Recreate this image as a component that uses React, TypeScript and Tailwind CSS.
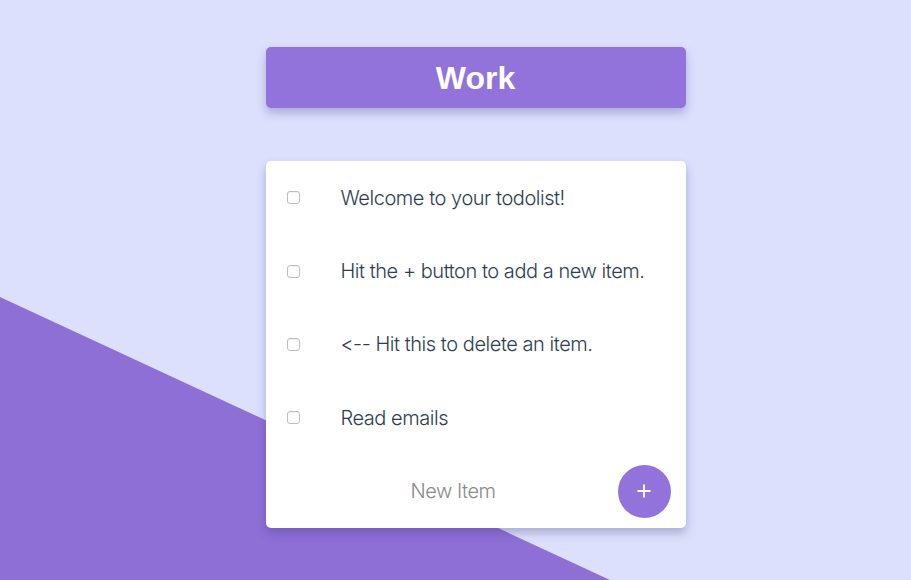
import React, { useState } from 'react';
import { Plus } from 'lucide-react';

const initialItems = [
  'Welcome to your todolist!',
  'Hit the + button to add a new item.',
  '<-- Hit this to delete an item.',
  'Read emails',
];

const App: React.FC = () => {
  const [items, setItems] = useState(initialItems);
  const [text, setText] = useState('');

  const addItem = () => {
    if (!text.trim()) return;
    setItems([...items, text]);
    setText('');
  };

  return (
    <div className="relative h-[580px] w-full overflow-hidden bg-[#dce0fd] font-['Liberation_Sans',sans-serif]">
      {/* diagonal purple background */}
      <div className="absolute inset-0 bg-[#8e6fd6] [clip-path:polygon(0_297px,610px_580px,0_580px)]" />

      <div className="relative flex flex-col items-center pt-[47px] pl-[40px]">
        {/* Heading */}
        <div className="w-[420px] h-[61px] rounded-[5px] bg-[#9173db] flex items-center justify-center shadow-[0_5px_10px_rgba(60,50,120,0.3)]">
          <h1 className="text-white text-[32px] font-bold">Work</h1>
        </div>

        {/* List */}
        <div className="mt-[53px] w-[420px] rounded-[5px] bg-white shadow-[0_5px_10px_rgba(60,50,120,0.3)]">
          {items.map((item, i) => (
            <div key={i} className="h-[73.4px] flex items-center pl-[21px]">
              <input
                type="checkbox"
                className="appearance-none w-[13px] h-[13px] shrink-0 rounded-[3px] border border-[#bdbdbd] bg-white shadow-[inset_0_1px_1px_rgba(0,0,0,0.06)] checked:bg-[#9173db] checked:border-[#9173db]"
              />
              <p className="ml-[41px] text-[20px] font-light text-[#2c3e50] font-['Inter',sans-serif] tracking-[-0.45px]">
                {item}
              </p>
            </div>
          ))}

          {/* New item */}
          <div className="h-[73.4px] flex items-center">
            <input
              value={text}
              onChange={(e) => setText(e.target.value)}
              placeholder="New Item"
              className="flex-1 min-w-0 pl-[23px] text-center text-[20px] font-light font-['Inter',sans-serif] tracking-[-0.45px] text-[#2c3e50] placeholder:text-[#8a8a8a] outline-none bg-transparent"
            />
            <button
              onClick={addItem}
              className="mr-[15px] w-[53px] h-[53px] rounded-full bg-[#9173db] flex items-center justify-center text-white"
            >
              <Plus size={20} strokeWidth={2.2} />
            </button>
          </div>
        </div>
      </div>
    </div>
  );
};

export default App;
